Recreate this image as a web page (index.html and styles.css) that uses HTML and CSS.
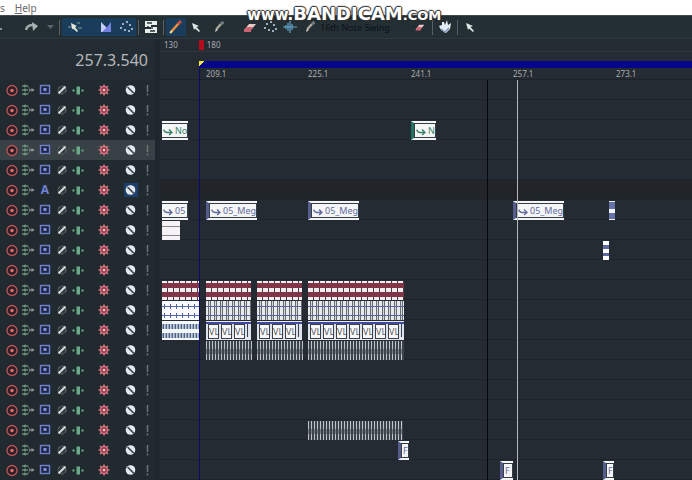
FILE: index.html
```html
<!DOCTYPE html>
<html lang="en">
<head>
<meta charset="utf-8">
<title>Track View</title>
<link rel="stylesheet" href="styles.css">
</head>
<body>
<svg class="sprite" aria-hidden="true">
  <symbol id="rec" viewBox="0 0 14 14"><circle cx="7" cy="7.500" r="5" fill="#2a2028" stroke="#bd5458" stroke-width="1.3"/><circle cx="7" cy="7.500" r="1.8" fill="#e46a6a"/></symbol>
  <symbol id="route" viewBox="0 0 14 14"><path d="M1 3h6M1 7h6M1 11h6" stroke="#648a76" stroke-width="1.400"/><path d="M4 1.500v3M4 5.500v3M4 9.500v3" stroke="#8ba99a"/><path d="M7 3l2 4-2 4" fill="none" stroke="#59666a"/><path d="M8 7h5" stroke="#8b9294" stroke-width="1.300"/><path d="M10.500 5l3 2-3 2z" fill="#8b9294"/></symbol>
  <symbol id="mono" viewBox="0 0 14 14"><rect x="2.500" y="2.500" width="9" height="8" fill="#1f2542" stroke="#7180cc" stroke-width="1.4"/><rect x="5.500" y="5" width="3" height="3" fill="#7f91e0"/></symbol>
  <symbol id="phase" viewBox="0 0 14 14"><circle cx="7" cy="7" r="4" fill="#303b3f" stroke="#6b7779" stroke-dasharray="3 1.500"/><path d="M3.500 10.500l7-7" stroke="#d9dfdc" stroke-width="1.800"/></symbol>
  <symbol id="pan" viewBox="0 0 14 14"><rect x="5.500" y="3.500" width="3.500" height="8" fill="#6aa889"/><path d="M1 7.500h3M10 7.500h3" stroke="#548c70" stroke-width="1.2"/><path d="M2.500 6v3M11.500 6v3" stroke="#548c70" stroke-width="1.400"/></symbol>
  <symbol id="gear" viewBox="0 0 14 14"><path d="M7 1.500v11M1.500 7h11M3 3l8 8M11 3l-8 8" stroke="#bd7680" stroke-width="1.700"/><circle cx="7" cy="7" r="3.400" fill="#7a2f40" stroke="#d9707f" stroke-width="1.500"/><circle cx="7" cy="7" r="1.500" fill="#f3b3ba"/></symbol>
  <symbol id="bypass" viewBox="0 0 14 14"><circle cx="6.500" cy="7" r="4.800" fill="#e6eaf0"/><path d="M3.500 4l6.500 6.500" stroke="#3c4654" stroke-width="1.7"/></symbol>
  <symbol id="bang" viewBox="0 0 14 14"><path d="M6.500 2v7M6.500 10.500v2" stroke="#6c7476" stroke-width="1.5"/></symbol>
  <symbol id="arrow" viewBox="0 0 14 14"><path d="M3 3l7 3-2.500 1 3.500 4-1 1-4-3.500L5 10z" fill="#dce6e6"/></symbol>
  <symbol id="eraser" viewBox="0 0 14 14"><path d="M1 10l5-6h7l-5 6z" fill="#eac9ca"/><path d="M1 10l2.500-3h6.500l-2 3v2H1z" fill="#ca6472"/></symbol>
  <symbol id="brush" viewBox="0 0 14 14"><path d="M3 12l1-4 2 2z" fill="#d7d2c2"/><path d="M4.500 9L9 4" stroke="#a7a79c" stroke-width="2.500"/><path d="M9 4l2.500-2" stroke="#70797b" stroke-width="3"/></symbol>
  <symbol id="dots" viewBox="0 0 14 14"><path d="M1 8h2M3 4h2M7 2h2M10 5h2M12 9h2M5 10h2M9 11h2" stroke="#9db0c0" stroke-width="2"/></symbol>
  <symbol id="flow" viewBox="0 0 14 14"><path d="M1 5q1 4 5 4h6M8.500 5l4 4-4 3.500" fill="none" stroke="currentColor" stroke-width="2"/></symbol>
</svg>

<nav class="menubar"><a href="#options">s</a><a href="#help"><u>H</u>elp</a></nav>

<header class="toolbar">
  <span class="stub"></span>
  <button class="tool" aria-label="Redo"><svg viewBox="0 0 14 14"><path d="M1 10q1-5 7-5" fill="none" stroke="#9ea6a7" stroke-width="2.500"/><path d="M7 2l6 4-5 5z" fill="#aab2b3"/></svg></button>
  <button class="tool narrow" aria-label="Redo history"><svg viewBox="0 0 14 14"><path d="M4 5h7l-3.500 4z" fill="#59666b"/></svg></button>
  <i class="sep"></i>
  <div class="group">
    <button class="tool wide on" aria-label="Smart tool"><svg viewBox="0 0 14 14"><path d="M0 7h3M9 3h3M10 8h4" stroke="#8aa095"/><path d="M3 3l6 3-2 1 3 4-1 1-4-3.500-1 1z" fill="#e3ead9"/></svg></button>
    <button class="tool on" aria-label="Fade"><svg viewBox="0 0 14 14"><path d="M2 2v10h10z" fill="#c6cdf8"/><path d="M12 2v10H3l5-5z" fill="#7280df"/></svg></button>
    <button class="tool on" aria-label="Envelope"><svg><use href="#dots"/></svg></button>
  </div>
  <i class="sep"></i>
  <button class="tool" aria-label="Snap grid"><svg viewBox="0 0 14 14"><path d="M1 1h12v4H7v2h6v6H1V9h6V7H1z" fill="#e8eeec"/><path d="M3 3h5M8 5v4M6 11h5M3 7h2" stroke="#26343a" stroke-width="1.300"/></svg></button>
  <i class="sep"></i>
  <button class="tool on" aria-label="Draw"><svg viewBox="0 0 14 14"><path d="M2 12l8-9" stroke="#e8933e" stroke-width="2.500"/><path d="M9 4l3-3" stroke="#c44f46" stroke-width="3"/><path d="M1 13l2-2" stroke="#f1d79b" stroke-width="2"/></svg></button>
  <button class="tool" aria-label="Select"><svg><use href="#arrow"/></svg></button>
  <button class="tool brushes" aria-label="Paint"><svg><use href="#brush"/></svg></button>
  <button class="tool" aria-label="Erase"><svg><use href="#eraser"/></svg></button>
  <button class="tool" aria-label="Pattern"><svg><use href="#dots"/></svg></button>
  <button class="tool" aria-label="Scrub"><svg viewBox="0 0 14 14"><path d="M0 7h14M3 5v4M5 3v8M7 1v12M9 4v6" stroke="#64a5cd" stroke-width="1.200"/></svg></button>
  <button class="tool" aria-label="Pattern brush"><svg><use href="#brush"/></svg></button>
  <select class="pattern" aria-label="Pattern name"><option>16th Note Swing</option></select>
  <button class="tool" aria-label="Clear pattern"><svg class="small"><use href="#eraser"/></svg></button>
  <i class="sep"></i>
  <button class="tool" aria-label="Audition"><svg viewBox="0 0 14 14"><path d="M1 6l3-1V2h2l1 3 2-5 1 5 3-2-1 6-4 4-5-3z" fill="#e4edf5"/><path d="M3 9l4 3 4-4" fill="none" stroke="#7e95bd" stroke-width="1.500"/></svg></button>
  <i class="sep"></i>
  <button class="tool" aria-label="Pointer"><svg><use href="#arrow"/></svg></button>
  <div class="brand"><span class="side">www.</span><span class="name">BANDICAM</span><span class="side dom">.COM</span></div>
</header>

<main class="workspace">
  <section class="panel">
    <output class="clock">257.3.540</output>
    <div id="strips"></div>
  </section>
  <section class="timeline">
    <div class="tempo"><span>130</span><span class="flag"></span><span>180</span></div>
    <div class="loop"><span class="range"></span></div>
    <div class="ruler" id="ruler"></div>
    <div class="lanes" id="lanes"></div>
    <i class="line start"></i>
    <i class="line end"></i>
    <i class="line playhead"></i>
  </section>
</main>
<script src="app.js"></script>
</body>
</html>
```
FILE: styles.css
```css
* { box-sizing: border-box; }
body {
  margin: 0;
  min-height: 100vh;
  display: flex;
  flex-direction: column;
  background: #242b33;
  color: #a9adb1;
  font-family: "Noto Sans", "Open Sans", sans-serif;
  font-size: 8px;
  overflow: hidden;
}
.sprite { display: none; }
button { border: 0; padding: 0; background: none; font: inherit; color: inherit; }
svg { display: block; width: 14px; height: 14px; }

.menubar {
  display: flex;
  gap: 10px;
  height: 15px;
  background: #fff;
  font-size: 10px;
  line-height: 16px;
}
.menubar a { color: #686868; text-decoration: none; }

.toolbar {
  position: relative;
  display: flex;
  align-items: center;
  height: 24px;
  background: #242f34;
  border-top: 1px solid #404a4d;
  border-bottom: 1px solid #2f383e;
}
.stub { width: 2px; height: 2px; margin: 4px 20px 0 0; background: #8b9294; }
.tool {
  width: 20px;
  height: 18px;
  display: flex;
  flex: none;
  align-items: center;
  justify-content: center;
}
.narrow { width: 15px; }
.wide { width: 34px; padding-right: 8px; }
.brushes { width: 34px; padding-right: 8px; }
.on { background: #1b3d5c; }
.group { display: flex; }
.small { width: 10px; height: 10px; }
.sep { flex: none; width: 1px; height: 15px; margin: 0 2px; background: #566165; }
.pattern {
  appearance: none;
  width: 90px;
  border: 0;
  padding: 0;
  background: none;
  color: #0c1214;
  font: 9px "Noto Sans", sans-serif;
}
.brand {
  position: absolute;
  left: 247px;
  top: -12px;
  display: flex;
  align-items: baseline;
  color: #fff;
  font-family: "DejaVu Sans", sans-serif;
  font-weight: bold;
  line-height: 20px;
  text-shadow: 1px 0 1px #333, -1px 0 1px #333, 0 1px 1px #333, 0 -1px 1px #333, 0 0 2px #333;
}
.side { font-size: 15px; }
.name { font-size: 18px; }
.dom { font-size: 13px; }

.workspace { flex: 1; display: grid; grid-template-columns: 160px 1fr; }
.panel { background: #202a2f; border-right: 5px solid #1f272e; }
.clock {
  display: block;
  height: 41px;
  padding-right: 7px;
  color: #b5b8ba;
  background: #242c33;
  font-size: 16px;
  line-height: 42px;
  text-align: right;
}
.strip {
  display: grid;
  grid-template-columns: 16px 16px 18px 16px 16px 35px 19px 15px;
  justify-items: center;
  align-items: center;
  height: 20px;
  padding-left: 4px;
}
.strip.selected { background: #384145; }
.strip .lit { background: #1d406a; }
.letter { color: #7180d4; font-size: 12px; font-weight: bold; line-height: 14px; }

.timeline { position: relative; overflow: hidden; }
.tempo {
  display: flex;
  align-items: center;
  height: 13px;
  padding-left: 4px;
  border-bottom: 1px solid #303640;
  line-height: 10px;
}
.flag { width: 5px; height: 10px; margin: 0 3px 0 21px; background: #b40c18; }
.loop { height: 16px; padding: 9px 0 0 39px; }
.range { display: block; height: 7px; background: linear-gradient(135deg, #f4ec3c 4px, transparent 4px) no-repeat #05058a; }
.ruler { display: flex; height: 12px; padding-left: 46px; border-bottom: 1px solid #1c2228; line-height: 12px; }
.ruler span { flex: none; width: 102px; }
.ruler span:nth-child(even) { width: 103px; }
.lane { position: relative; height: 20px; border-bottom: 1px solid #1e242b; }
.lane.automation { background: #212429; }
.line { position: absolute; top: 41px; bottom: 0; width: 1px; }
.start { left: 39px; top: 28px; background: #0a0a72; }
.end { left: 327px; background: #06080b; }
.playhead { left: 357px; background: #b5b8bb; }

/* Clips sit on a time canvas; app.js gives each its start and length. */
.clip { position: absolute; top: 1px; height: 19px; overflow: hidden; background: #f4f5f7; }
.label {
  display: flex;
  align-items: center;
  padding-left: 1px;
  gap: 2px;
  border: solid #f4f5f7;
  border-width: 2px 0;
  color: #626c9b;
  font-size: 9px;
  line-height: 13px;
  white-space: nowrap;
  box-shadow: inset 0 1px #343c44, inset 0 -1px #343c44, inset -1px 0 #343c44;
}
.label svg { flex: none; width: 10px; height: 10px; }
.green { color: #398268; }
.edge { border-left: 3px solid #555d8c; padding-left: 2px; }
.edge.green { border-left-color: #23705d; }
.edge::before { content: ""; position: absolute; left: 0; top: 1px; bottom: 1px; width: 1px; background: #343c44; }
.edge::after { content: ""; position: absolute; left: -3px; top: 6px; width: 2px; height: 4px; background: #e6e8f0; }
.blank { background: linear-gradient(#f6f3f6 5px, #8d838d 5px 6px, #f6f3f6 6px 14px, #8d838d 14px 15px, #f6f3f6 15px); }
.short { background: linear-gradient(#f0f1f7 1px, #6572a7 1px 8px, #f4f5fa 8px 12px, #6572a7 12px 18px, #f0f1f7 18px); }
.wave { background: linear-gradient(#fff 4px, #5e6a9c 4px 8px, #fff 8px 12px, #5e6a9c 12px 15px, #fff 15px); }
.red {
  background:
    linear-gradient(transparent 2px, #823546 2px 7px, transparent 7px 11px, #823546 11px 16px, transparent 16px),
    repeating-linear-gradient(90deg, #f2eef0 0 5px, #4a3a40 5px 6px);
}
.bars {
  background:
    linear-gradient(transparent 5px, #5a649b 5px 6px, transparent 6px 14px, #5a649b 14px 15px, transparent 15px),
    repeating-linear-gradient(90deg, #e8eaec 0 2px, #656d73 2px 3px, #d5d8da 3px 4px, #656d73 4px 5px, #e8eaec 5px 6px);
}
.blips {
  background:
    linear-gradient(#fbfcff 3px, transparent 3px 8px, #fbfcff 8px 12px, transparent 12px 17px, #fbfcff 17px),
    linear-gradient(transparent 5px, #5269ad 5px 6px, transparent 6px 14px, #5269ad 14px 15px, transparent 15px),
    repeating-linear-gradient(90deg, #fbfcff 0 2px, #51609a 2px 3px, #fbfcff 3px 6px);
}
.dense {
  background:
    linear-gradient(#f4f7fa 3px, transparent 3px 8px, #f4f7fa 8px 12px, transparent 12px 17px, #f4f7fa 17px),
    repeating-linear-gradient(90deg, #96a8bf 0 1px, #4b6285 1px 2px, #c4ceda 2px 3px);
}
.thin {
  background:
    linear-gradient(transparent 8px, #39444d88 8px 13px, transparent 13px),
    repeating-linear-gradient(90deg, #c0c2c7 0 1px, #3c444b 1px 3px);
}
.boxes {
  display: flex;
  gap: 4px;
  padding: 4px 0 2px 3px;
  background:
    linear-gradient(#e8e9ee 1px, #3e49a0 1px 3px, transparent 3px 16px, #e8e9ee 16px),
    repeating-linear-gradient(90deg, #dfe3ec 0 2px, #343c50 2px 3px, #dfe3ec 3px 12px, #343c50 12px 13px);
}
.boxes span {
  flex: none;
  width: 9px;
  overflow: hidden;
  background: #f8f8fa;
  box-shadow: 0 0 0 1px #3a4049;
  color: #5b6065;
  font-size: 9px;
  line-height: 13px;
}
```
FILE: app.js
```js
const ICONS = [
  ["rec", "Record"], ["route", "Routing"], ["mono", "Input mode"], ["phase", "Phase"],
  ["pan", "Pan"], ["gear", "Effects"], ["bypass", "Bypass"], ["bang", "Monitor"]
];
const TRACKS = 20;
const SELECTED = 4;
const AUTOMATION = 6;

// track, start, length, classes, label
const CLIPS = [
  [3, 2, 26, "label green", "No"], [3, 251, 25, "label green edge", "N"],
  [7, 2, 26, "label", "05"], [7, 46, 51, "label edge", "05_Meg"],
  [7, 148, 51, "label edge", "05_Meg"], [7, 353, 51, "label edge", "05_Meg"],
  [7, 449, 6, "short"], [8, 2, 18, "blank"], [9, 443, 6, "wave"],
  [11, 2, 37, "red"], [11, 46, 45, "red"], [11, 97, 45, "red"], [11, 148, 96, "red"],
  [12, 2, 37, "blips"], [12, 46, 45, "bars"], [12, 97, 45, "bars"], [12, 148, 96, "bars"],
  [13, 2, 37, "dense"], [13, 46, 45, "boxes", 3], [13, 97, 45, "boxes", 3], [13, 148, 96, "boxes", 7],
  [14, 46, 46, "thin"], [14, 97, 46, "thin"], [14, 148, 96, "thin"],
  [18, 148, 95, "thin"], [19, 238, 11, "label edge plain", "F"],
  [20, 340, 13, "label edge plain", "F"], [20, 443, 11, "label edge plain", "F"]
];

const icon = id => `<svg aria-hidden="true"><use href="#${id}"/></svg>`;

function clip([, start, length, kind, content]) {
  let inner = "";
  if (kind === "boxes") inner = "<span>VL</span>".repeat(content);
  else if (content) inner = (kind.includes("plain") ? "" : icon("flow")) + content;
  return `<div class="clip ${kind}" style="left:${start}px;width:${length}px">${inner}</div>`;
}

let strips = "";
let lanes = "";
for (let n = 1; n <= TRACKS; n++) {
  const cells = ICONS.map(([id, name]) => {
    const letter = n === AUTOMATION && id === "mono";
    const lit = n === AUTOMATION && id === "bypass" ? ' class="lit"' : "";
    return `<button${lit} aria-label="${name} ${n}">${letter ? '<span class="letter">A</span>' : icon(id)}</button>`;
  }).join("");
  strips += `<div class="strip${n === SELECTED ? " selected" : ""}">${cells}</div>`;
  lanes += `<div class="lane${n === AUTOMATION ? " automation" : ""}">${CLIPS.filter(c => c[0] === n).map(clip).join("")}</div>`;
}
document.getElementById("strips").innerHTML = strips;
document.getElementById("lanes").innerHTML = lanes;
document.getElementById("ruler").innerHTML =
  [209, 225, 241, 257, 273].map(bar => `<span>${bar}.1</span>`).join("");
```
